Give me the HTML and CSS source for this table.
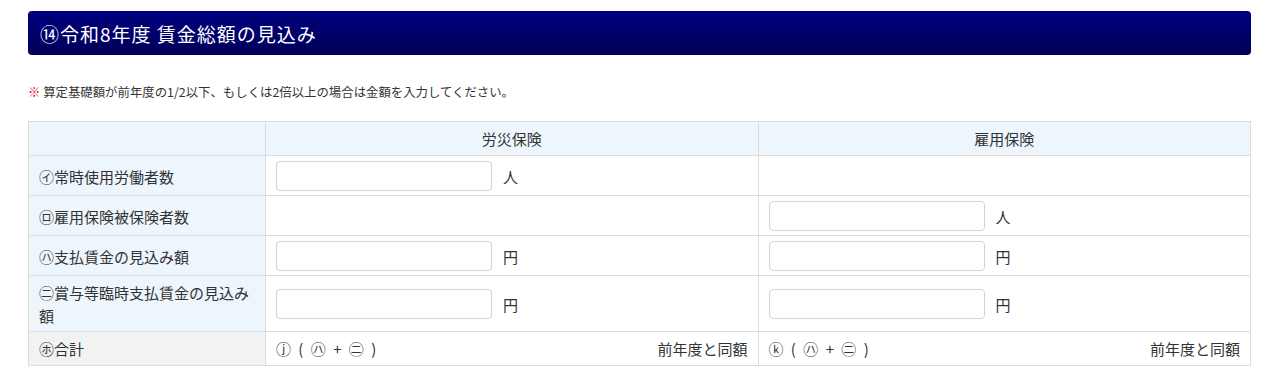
FILE: index.html
```html
<!DOCTYPE html>
<html lang="ja">
<head>
    <meta charset="UTF-8">
    <meta name="viewport" content="width=device-width, initial-scale=1.0">
    <title>賃金総額の見込み</title>
    <link rel="stylesheet" href="styles.css">
</head>
<body>
    <div class="container">
        <h2 class="section-title">⑭令和8年度 賃金総額の見込み</h2>

        <p class="note"><span class="mark">※</span> 算定基礎額が前年度の1/2以下、もしくは2倍以上の場合は金額を入力してください。</p>

        <table class="wage-table">
            <thead>
                <tr>
                    <th class="label-col"></th>
                    <th>労災保険</th>
                    <th>雇用保険</th>
                </tr>
            </thead>
            <tbody>
                <tr>
                    <th class="row-label">㋑常時使用労働者数</th>
                    <td><div class="field"><input type="text"><span class="unit">人</span></div></td>
                    <td></td>
                </tr>
                <tr>
                    <th class="row-label">㋺雇用保険被保険者数</th>
                    <td></td>
                    <td><div class="field"><input type="text"><span class="unit">人</span></div></td>
                </tr>
                <tr>
                    <th class="row-label">㋩支払賃金の見込み額</th>
                    <td><div class="field"><input type="text"><span class="unit">円</span></div></td>
                    <td><div class="field"><input type="text"><span class="unit">円</span></div></td>
                </tr>
                <tr>
                    <th class="row-label">㊁賞与等臨時支払賃金の見込み額</th>
                    <td><div class="field"><input type="text"><span class="unit">円</span></div></td>
                    <td><div class="field"><input type="text"><span class="unit">円</span></div></td>
                </tr>
                <tr class="total-row">
                    <th class="row-label">㋭合計</th>
                    <td><div class="total"><span class="formula">ⓙ ( ㋩ + ㊁ )</span><span>前年度と同額</span></div></td>
                    <td><div class="total"><span class="formula">ⓚ ( ㋩ + ㊁ )</span><span>前年度と同額</span></div></td>
                </tr>
            </tbody>
        </table>
    </div>
</body>
</html>
```

FILE: styles.css
```css
body {
    margin: 0;
    font-family: "Noto Sans CJK JP", "Noto Sans", sans-serif;
    color: #333;
    background: #fff;
}

.container {
    padding: 11px 29px 0 28px;
}

.section-title {
    margin: 0;
    height: 44px;
    padding: 0 12px;
    display: flex;
    align-items: center;
    font-size: 19px;
    letter-spacing: 1px;
    font-weight: normal;
    color: #fff;
    background: linear-gradient(to bottom, #000080, #000058);
    border-radius: 4px;
}

.note {
    margin: 27px 0 19px;
    font-size: 12.4px;
    line-height: 20px;
}

.note .mark {
    color: #e60012;
    font-weight: bold;
}

.wage-table {
    width: 100%;
    border-collapse: collapse;
    table-layout: fixed;
    font-size: 15px;
    line-height: 23px;
}

.wage-table th,
.wage-table td {
    border: 1px solid #dcdcdc;
    padding: 5px 10px 4px;
    font-weight: normal;
    vertical-align: middle;
}

.wage-table thead th {
    background: #edf5fd;
    text-align: center;
    padding: 5px 10px;
}

.label-col {
    width: 216px;
}

.row-label {
    text-align: left;
    background: #edf5fd;
}

.total-row th,
.total-row td {
    padding: 5px 10px;
}

.total-row .row-label {
    background: #f2f2f2;
}

.field {
    display: flex;
    align-items: center;
    gap: 11px;
}

.field input {
    width: 216px;
    height: 30px;
    box-sizing: border-box;
    border: 1px solid #d4d4d4;
    border-radius: 4px;
    padding: 4px 8px;
    font-size: 15px;
}

.total {
    display: flex;
    justify-content: space-between;
}

.formula {
    word-spacing: 4px;
}
```
